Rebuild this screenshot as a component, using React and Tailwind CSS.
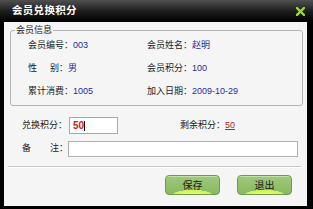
const Row = ({ label, value, color = 'text-[#2a2aa0]' }) => (
  <div className="flex items-center">
    <span className="text-[#222]">{label}</span>
    <span className={color}>{value}</span>
  </div>
);

const GreenButton = ({ children }) => (
  <button className="w-[55px] h-[20px] rounded-[4px] border border-[#6f9a4a] text-[10px] text-[#1a1a1a] bg-[radial-gradient(ellipse_62%_50%_at_50%_108%,#e8ff70_0%,#cdf35c_60%,transparent_63%),linear-gradient(#9ec97c,#88b960)] shadow-[inset_0_1px_0_#c2e0a8]">
    {children}
  </button>
);

const App = () => {
  return (
    <div
      className="w-[313px] h-[209px] bg-black flex flex-col text-[9px]"
      style={{ fontFamily: '"Liberation Sans", "Noto Sans CJK SC", sans-serif' }}
    >
      {/* title bar */}
      <div className="h-[22px] flex items-center justify-between pl-[12px] pr-[8px] bg-[linear-gradient(#505050,#1e1e1e_50%,#000)]">
        <span className="text-white font-bold text-[10.5px] tracking-[0.3px]">会员兑换积分</span>
        <svg width="9" height="9" viewBox="0 0 9 9">
          <path d="M1 1 L8 8 M8 1 L1 8" stroke="#9fd43c" strokeWidth="2.4" strokeLinecap="square" />
        </svg>
      </div>

      <div className="flex-1 ml-[4px] mr-[6px] mb-[3px] bg-[#f5f5f5] flex flex-col">
        <fieldset className="ml-[6px] mr-[4px] mt-[1px] h-[83px] border border-[#b4b4b4] rounded-[3px] pl-[17px] pt-[1px]">
          <legend className="ml-[-13px] px-[1px] text-[#222] leading-[14px]">会员信息</legend>
          <div className="grid grid-cols-[119px_1fr] gap-y-[9px] leading-[14px]">
            <Row label="会员编号：" value="003" />
            <Row label="会员姓名：" value="赵明" />
            <Row label={<span>性<span className="inline-block w-[13px]" />别：</span>} value="男" />
            <Row label="会员积分：" value="100" />
            <Row label="累计消费：" value="1005" />
            <Row label="加入日期：" value="2009-10-29" />
          </div>
        </fieldset>

        <div className="flex items-center mt-[11px] pl-[18px]">
          <span className="text-[#222]">兑换积分：</span>
          <div className="ml-[2px] w-[49px] h-[17px] border border-[#a8a8a8] bg-white flex items-center pl-[3px]">
            <span className="text-[#d01818] font-bold text-[10px]">50</span>
            <span className="w-px h-[10px] bg-black" />
          </div>
          <span className="ml-[62px] text-[#222]">剩余积分：</span>
          <span className="text-[#c02020] underline">50</span>
        </div>

        <div className="flex items-center mt-[7px] pl-[18px] pr-[9px]">
          <span className="text-[#222]">备<span className="inline-block w-[19px]" />注：</span>
          <div className="flex-1 h-[16px] border border-[#b0b0b0] bg-white" />
        </div>

        <div className="ml-[4px] mr-[6px] mt-[9px] border-t border-[#c8c8c8] shadow-[0_1px_0_#fff]" />

        <div className="flex justify-end gap-[17px] pr-[15px] mt-[8px]">
          <GreenButton>保存</GreenButton>
          <GreenButton>退出</GreenButton>
        </div>
      </div>
    </div>
  );
};

export default App;
